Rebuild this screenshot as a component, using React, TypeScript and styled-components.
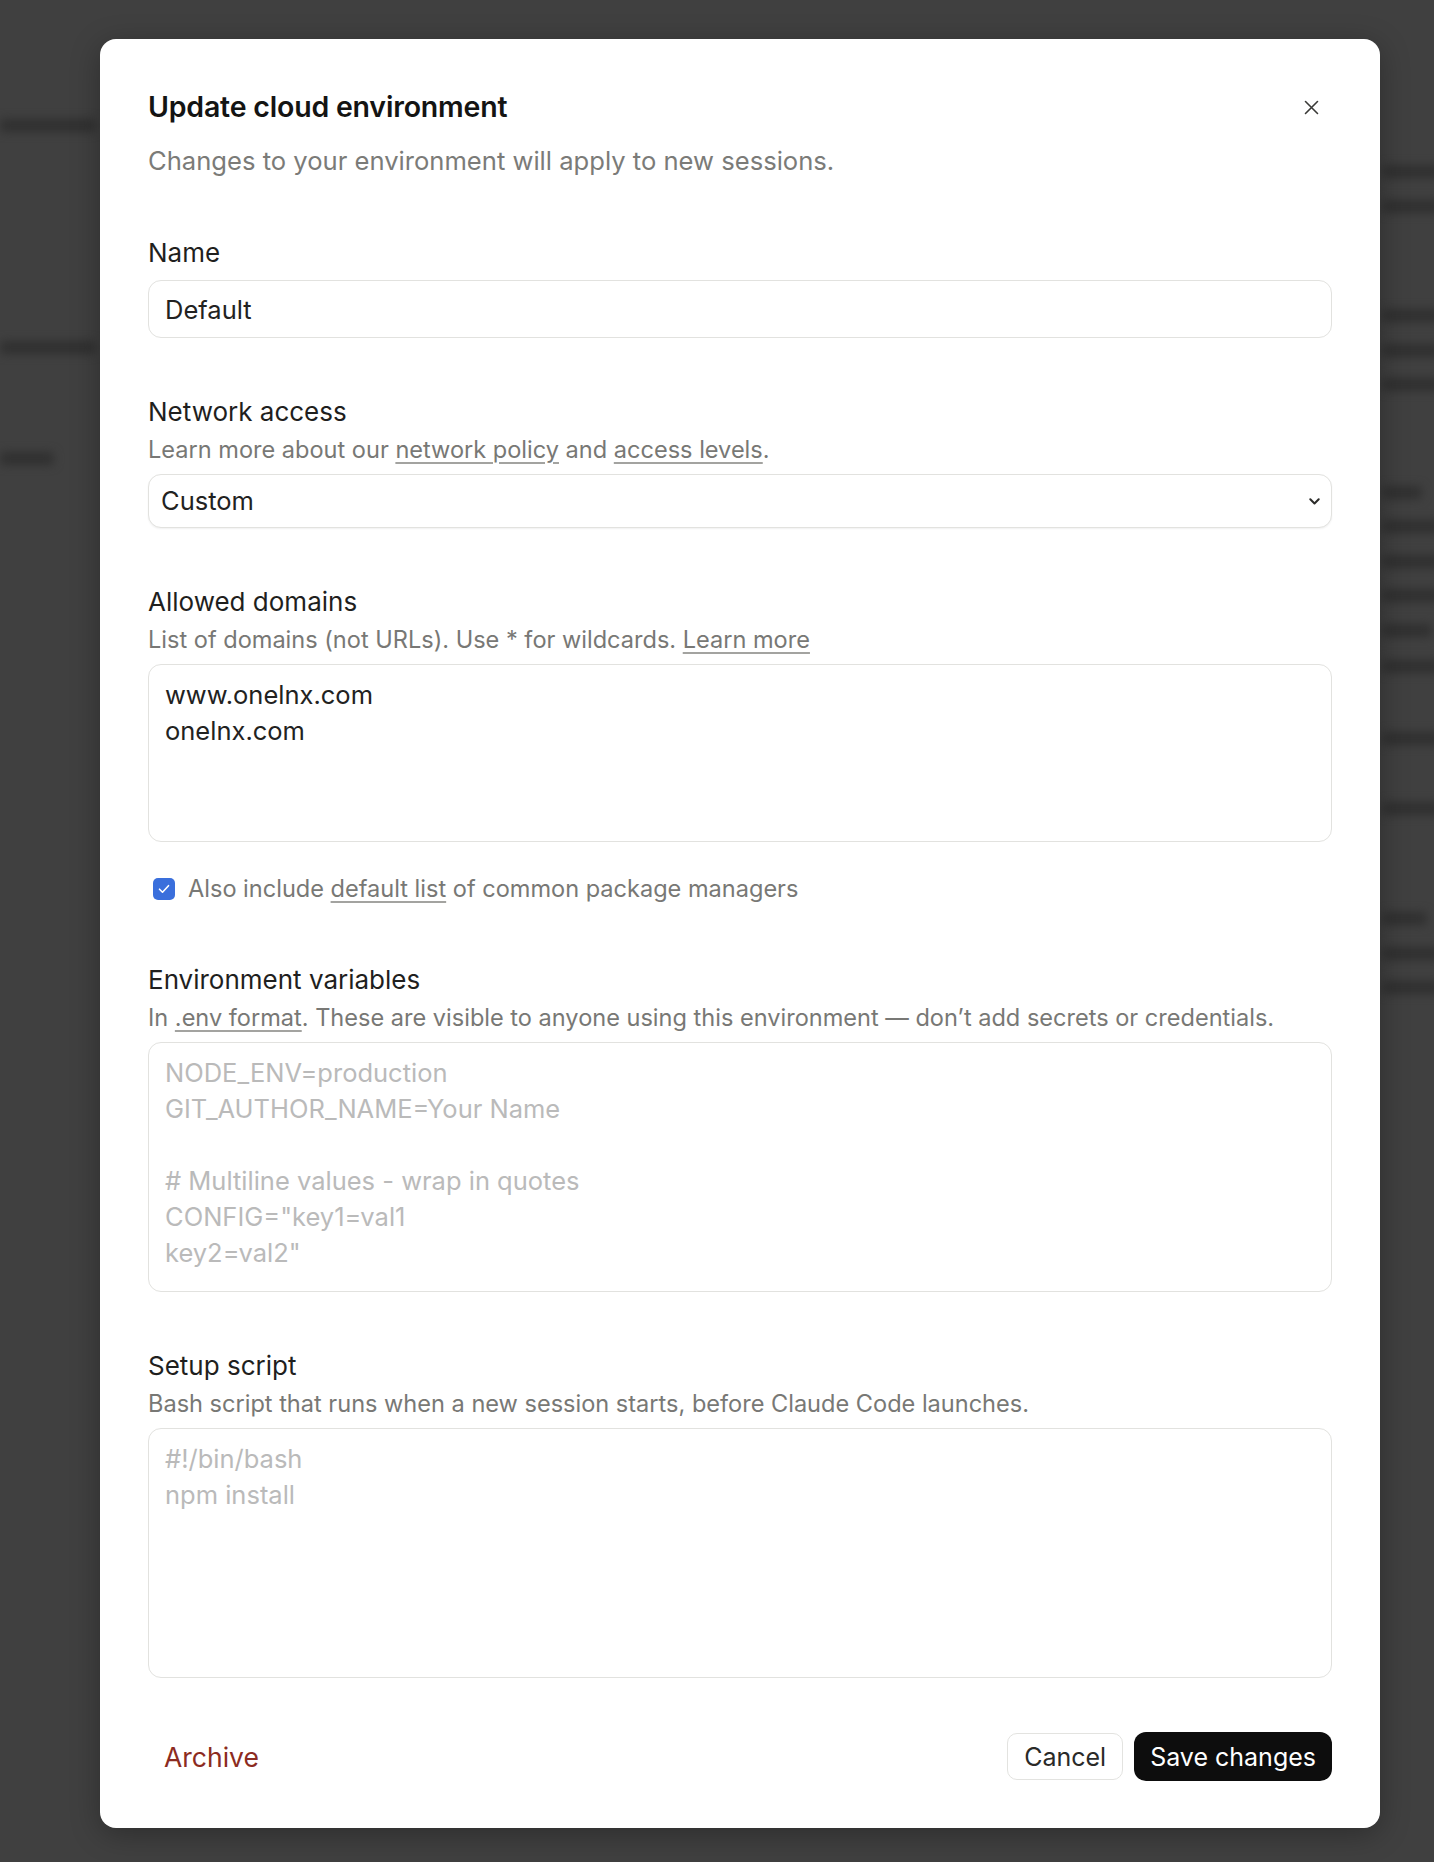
import React from 'react'
import styled, { createGlobalStyle } from 'styled-components'

// blurred page behind the dialog: [centerY, width]
const leftLines: [number, number][] = [[126, 96], [349, 96], [461, 54]]
const rightLines: [number, number][] = [
  [172, 60], [208, 60], [318, 60], [354, 60], [389, 60], [498, 40], [533, 60], [569, 60],
  [604, 60], [640, 50], [677, 60], [750, 60], [821, 60], [932, 45], [968, 60], [1003, 60],
]

function BlurColumn({ lines, width }: { lines: [number, number][], width: number }) {
  let prev = 0
  return (
    <BackdropColumn $width={width}>
      {lines.map(([center, w], i) => {
        const top = center - 7 - prev
        prev = center + 7
        return <BlurLine key={i} $top={top} $width={w} />
      })}
    </BackdropColumn>
  )
}

const envPlaceholder = 'NODE_ENV=production\nGIT_AUTHOR_NAME=Your Name\n\n# Multiline values - wrap in quotes\nCONFIG="key1=val1\nkey2=val2"'
const setupPlaceholder = '#!/bin/bash\nnpm install'

export default function App() {
  return (
    <>
      <GlobalStyle />
      <Screen>
        <Backdrop>
          <BlurColumn lines={leftLines} width={100} />
          <BlurColumn lines={rightLines} width={52} />
        </Backdrop>

        <Overlay>
          <Modal role="dialog">
            <Header>
              <Title>Update cloud environment</Title>
              <CloseButton aria-label="Close">
                <svg width="15" height="15" viewBox="0 0 15 15" fill="none" stroke="currentColor" strokeWidth="1.6" strokeLinecap="round">
                  <path d="M1.5 1.5l12 12M13.5 1.5l-12 12" />
                </svg>
              </CloseButton>
            </Header>
            <Subtitle>Changes to your environment will apply to new sessions.</Subtitle>

            <Section>
              <Label>Name</Label>
              <TextInput defaultValue="Default" />
            </Section>

            <Section>
              <Label>Network access</Label>
              <Hint>Learn more about our <Link href="#">network policy</Link> and <Link href="#">access levels</Link>.</Hint>
              <SelectBox>
                <SelectValue>Custom</SelectValue>
                <svg width="11" height="7" viewBox="0 0 11 7" fill="none" stroke="#2b2b29" strokeWidth="2" strokeLinecap="round" strokeLinejoin="round">
                  <path d="M1.3 1.3l4.2 4.2 4.2-4.2" />
                </svg>
              </SelectBox>
            </Section>

            <Section>
              <Label>Allowed domains</Label>
              <Hint>List of domains (not URLs). Use * for wildcards. <Link href="#">Learn more</Link></Hint>
              <TextArea $height={178} defaultValue={'www.onelnx.com\nonelnx.com'} />
              <CheckRow>
                <CheckBox>
                  <svg width="12" height="10" viewBox="0 0 12 10" fill="none" stroke="#fff" strokeWidth="1.6" strokeLinecap="round" strokeLinejoin="round">
                    <path d="M1.5 5.2l3 3 6-6.5" />
                  </svg>
                </CheckBox>
                <CheckText>Also include <Link href="#">default list</Link> of common package managers</CheckText>
              </CheckRow>
            </Section>

            <Section>
              <Label>Environment variables</Label>
              <Hint>In <Link href="#">.env format</Link>. These are visible to anyone using this environment — don’t add secrets or credentials.</Hint>
              <TextArea $height={250} placeholder={envPlaceholder} />
            </Section>

            <Section>
              <Label>Setup script</Label>
              <Hint>Bash script that runs when a new session starts, before Claude Code launches.</Hint>
              <TextArea $height={250} placeholder={setupPlaceholder} />
            </Section>

            <Footer>
              <ArchiveButton>Archive</ArchiveButton>
              <Actions>
                <CancelButton>Cancel</CancelButton>
                <SaveButton>Save changes</SaveButton>
              </Actions>
            </Footer>
          </Modal>
        </Overlay>
      </Screen>
    </>
  )
}

const GlobalStyle = createGlobalStyle`
  html, body {
    margin: 0;
    padding: 0;
    background: #404040;
  }
  body {
    font-family: Inter, "Noto Sans", sans-serif;
  }
  * {
    box-sizing: border-box;
  }
`

const Screen = styled.div`
  position: relative;
  width: 1434px;
  height: 1862px;
  overflow: hidden;
  background: #404040;
`

const Backdrop = styled.div`
  display: flex;
  justify-content: space-between;
  height: 100%;
  filter: blur(5px);
`

const BackdropColumn = styled.div<{ $width: number }>`
  width: ${p => p.$width}px;
  display: flex;
  flex-direction: column;
`

const BlurLine = styled.div<{ $top: number, $width: number }>`
  flex-shrink: 0;
  margin-top: ${p => p.$top}px;
  width: ${p => p.$width}px;
  height: 13px;
  border-radius: 4px;
  background: #303030;
`

const Overlay = styled.div`
  position: absolute;
  inset: 0;
  display: flex;
  align-items: flex-start;
  padding: 39px 0 0 100px;
`

const Modal = styled.div`
  width: 1280px;
  background: #ffffff;
  border-radius: 16px;
  padding: 48px 48px 47px;
  box-shadow: 0 6px 30px rgba(0, 0, 0, 0.3);
  display: flex;
  flex-direction: column;
`

const Header = styled.div`
  display: flex;
  align-items: center;
  justify-content: space-between;
  height: 40px;
`

const Title = styled.h2`
  margin: 0;
  font-size: 28.5px;
  font-weight: 600;
  line-height: 40px;
  color: #141413;
  letter-spacing: -0.2px;
`

const CloseButton = styled.button`
  width: 42px;
  height: 40px;
  padding: 0;
  border: 0;
  background: none;
  display: flex;
  align-items: center;
  justify-content: center;
  color: #3a3a38;
  cursor: pointer;
`

const Subtitle = styled.p`
  margin: 16px 0 0;
  font-size: 25.6px;
  line-height: 36px;
  color: #7b7b78;
`

const Section = styled.div`
  margin-top: 56px;
  display: flex;
  flex-direction: column;
`

const Label = styled.label`
  font-size: 26px;
  line-height: 36px;
  color: #1f1f1e;
`

const Hint = styled.div`
  margin-top: 3px;
  font-size: 23.55px;
  line-height: 34px;
  color: #787875;
`

const Link = styled.a`
  color: inherit;
  text-decoration: underline;
  text-decoration-color: #a3a3a0;
  text-decoration-thickness: 1.5px;
  text-underline-offset: 4px;
`

const fieldBox = `
  margin-top: 7px;
  width: 100%;
  border: 1.5px solid #e2e2df;
  border-radius: 13px;
  background: #ffffff;
  font-family: Inter, "Noto Sans", sans-serif;
  font-size: 25.5px;
  color: #222221;
  outline: none;
`

const TextInput = styled.input`
  ${fieldBox}
  margin-top: 9px;
  height: 58px;
  padding: 0 16px;
`

const SelectBox = styled.div`
  ${fieldBox}
  height: 54px;
  padding: 0 11px 0 12px;
  display: flex;
  align-items: center;
  justify-content: space-between;
  box-shadow: 0 1px 2px rgba(0, 0, 0, 0.06);
`

const SelectValue = styled.span`
  line-height: 36px;
`

const TextArea = styled.textarea<{ $height: number }>`
  ${fieldBox}
  height: ${p => p.$height}px;
  padding: 12px 16px;
  line-height: 36px;
  resize: none;

  &::placeholder {
    color: #bababa;
  }
`

const CheckRow = styled.div`
  margin-top: 30px;
  display: flex;
  align-items: center;
  gap: 13px;
  padding-left: 5px;
`

const CheckBox = styled.span`
  width: 22px;
  height: 22px;
  border-radius: 5px;
  background: #3a6fdc;
  display: flex;
  align-items: center;
  justify-content: center;
  flex-shrink: 0;
`

const CheckText = styled.span`
  font-size: 23.55px;
  line-height: 34px;
  color: #787875;
`

const Footer = styled.div`
  margin-top: 54px;
  display: flex;
  align-items: center;
  justify-content: space-between;
`

const Actions = styled.div`
  display: flex;
  align-items: center;
  gap: 11px;
`

const buttonBase = `
  font-family: Inter, "Noto Sans", sans-serif;
  font-size: 25px;
  cursor: pointer;
  display: flex;
  align-items: center;
`

const ArchiveButton = styled.button`
  ${buttonBase}
  height: 49px;
  padding: 0 16px;
  border: 0;
  background: none;
  font-size: 26.5px;
  color: #8c2b21;
`

const CancelButton = styled.button`
  ${buttonBase}
  height: 47px;
  padding: 0 16px;
  border: 1.5px solid #e3e3e0;
  border-radius: 10px;
  background: #ffffff;
  color: #2a2a28;
`

const SaveButton = styled.button`
  ${buttonBase}
  height: 49px;
  padding: 0 16px;
  border: 0;
  border-radius: 12px;
  background: #0d0d0d;
  color: #ffffff;
`
